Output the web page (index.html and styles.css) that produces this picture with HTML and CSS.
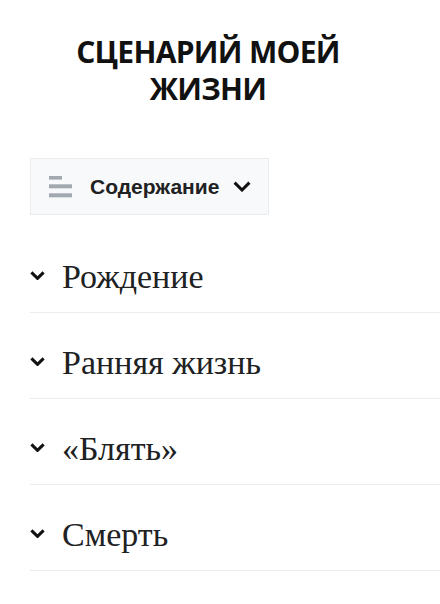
FILE: index.html
```html
<!DOCTYPE html>
<html lang="ru">
<head>
<meta charset="utf-8">
<title>Сценарий моей жизни</title>
<link rel="stylesheet" href="styles.css">
</head>
<body>
<main class="page">
  <h1 class="title">СЦЕНАРИЙ МОЕЙ<br>ЖИЗНИ</h1>

  <button class="toc-toggle" type="button">
    <svg class="toc-icon" width="23" height="22" viewBox="0 0 23 22" aria-hidden="true">
      <rect x="0" y="0" width="13" height="3.6" fill="#a2a9b1"/>
      <rect x="0" y="8.3" width="23" height="4" fill="#a2a9b1"/>
      <rect x="0" y="17.3" width="23" height="4" fill="#a2a9b1"/>
    </svg>
    <span class="toc-label">Содержание</span>
    <svg class="chevron chevron-lg" viewBox="0 0 18 11" aria-hidden="true">
      <polyline points="1.6,1.6 9,9 16.4,1.6"/>
    </svg>
  </button>

  <ul class="sections">
    <li class="section">
      <svg class="chevron chevron-sm" viewBox="0 0 15 9" aria-hidden="true"><polyline points="1.4,1.4 7.5,7.4 13.6,1.4"/></svg>
      <span class="section-title">Рождение</span>
    </li>
    <li class="section">
      <svg class="chevron chevron-sm" viewBox="0 0 15 9" aria-hidden="true"><polyline points="1.4,1.4 7.5,7.4 13.6,1.4"/></svg>
      <span class="section-title">Ранняя жизнь</span>
    </li>
    <li class="section">
      <svg class="chevron chevron-sm" viewBox="0 0 15 9" aria-hidden="true"><polyline points="1.4,1.4 7.5,7.4 13.6,1.4"/></svg>
      <span class="section-title">«Блять»</span>
    </li>
    <li class="section">
      <svg class="chevron chevron-sm" viewBox="0 0 15 9" aria-hidden="true"><polyline points="1.4,1.4 7.5,7.4 13.6,1.4"/></svg>
      <span class="section-title">Смерть</span>
    </li>
  </ul>
</main>
</body>
</html>
```

FILE: styles.css
```css
html, body {
  margin: 0;
  padding: 0;
  background: #ffffff;
}

.page {
  display: flex;
  flex-direction: column;
  align-items: flex-start;
}

.title {
  align-self: stretch;
  margin: 33px 24px 0 0;
  font-family: "Open Sans", "Noto Sans", sans-serif;
  font-weight: 700;
  font-size: 30px;
  line-height: 37px;
  letter-spacing: -0.7px;
  text-align: center;
  color: #111111;
}

.toc-toggle {
  display: flex;
  align-items: center;
  box-sizing: border-box;
  width: 239px;
  height: 57px;
  margin: 51px 0 0 30px;
  padding: 0 0 0 18px;
  border: 1px solid #eaecf0;
  background: #f8f9fa;
  font: inherit;
  cursor: pointer;
}

.toc-icon {
  flex: none;
  display: block;
}

.toc-label {
  margin-left: 18px;
  font-family: "Liberation Sans", Arial, sans-serif;
  font-weight: 700;
  font-size: 21px;
  color: #202122;
}

.chevron {
  flex: none;
  display: block;
  fill: none;
  stroke: #111111;
  stroke-width: 3;
  stroke-linecap: butt;
  stroke-linejoin: miter;
}

.chevron-lg {
  width: 18px;
  height: 11px;
  margin-left: 14px;
}

.chevron-sm {
  width: 15px;
  height: 9px;
  margin-bottom: 4px;
}

.sections {
  list-style: none;
  align-self: stretch;
  margin: 12px 0 0 30px;
  padding: 0;
}

.section {
  display: flex;
  align-items: center;
  padding: 30px 0 15px 0;
  border-bottom: 1px solid #eaecf0;
}

.section-title {
  margin-left: 17px;
  font-family: "Liberation Serif", "DejaVu Serif", serif;
  font-size: 34px;
  line-height: 40px;
  color: #202122;
}
```
